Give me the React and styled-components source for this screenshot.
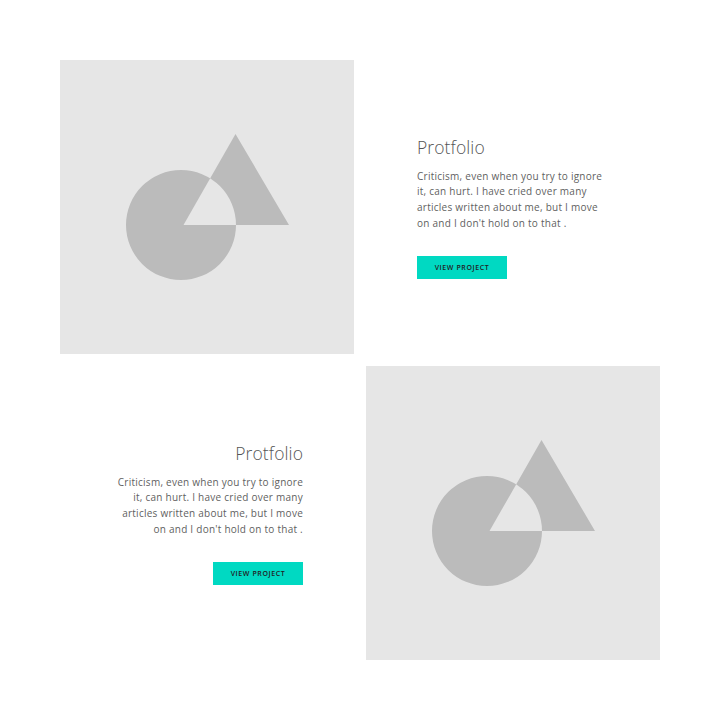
import React from 'react';
import styled, { createGlobalStyle } from 'styled-components';

const GlobalStyle = createGlobalStyle`
	html, body {
		margin: 0;
		padding: 0;
		background: #ffffff;
		font-family: "Open Sans", "Liberation Sans", sans-serif;
	}
`

const Page = styled.div`
	width: 720px;
	height: 720px;
	padding: 60px;
	box-sizing: border-box;
	display: grid;
	grid-template-rows: 294px 294px;
	row-gap: 12px;
`

const Row = styled.section`
	display: grid;
	grid-template-columns: ${props => props.reverse ? '1fr 294px' : '294px 1fr'};
	column-gap: 63px;
	align-items: center;
`

const Picture = styled.div`
	width: 294px;
	height: 294px;
	background: #e6e6e6;
	order: ${props => props.reverse ? 2 : 1};
	svg {
		display: block;
	}
`

const Info = styled.div`
	order: ${props => props.reverse ? 1 : 2};
	display: flex;
	flex-direction: column;
	align-items: ${props => props.reverse ? 'flex-end' : 'flex-start'};
	text-align: ${props => props.reverse ? 'right' : 'left'};
	padding-top: 2px;
`

const Title = styled.h2`
	margin: 0;
	font-family: "Open Sans", sans-serif;
	font-weight: 300;
	font-size: 17.5px;
	line-height: 22px;
	color: #555555;
	letter-spacing: 0.1px;
	position: relative;
	top: -1px;
`

const Text = styled.p`
	margin: 10px 0 0;
	font-size: 10px;
	line-height: 15.7px;
	color: #5f5f5f;
	letter-spacing: 0.25px;
	white-space: nowrap;
`

const Button = styled.button`
	margin-top: 25px;
	width: 90px;
	height: 23px;
	border: none;
	padding: 0;
	background: #00d9c2;
	color: #222222;
	font-family: "Open Sans", sans-serif;
	font-size: 7px;
	font-weight: 600;
	letter-spacing: 0.6px;
	cursor: pointer;
`

const Shapes = () => (
	<svg width="294" height="294" viewBox="0 0 294 294">
		<path
			fillRule="evenodd"
			fill="#bbbbbb"
			d="M66 165 A55 55 0 1 0 176 165 A55 55 0 1 0 66 165 Z M175.5 74 L229 165 L123.5 165 Z"
		/>
	</svg>
)

const projects = [
	{ id: 1, reverse: false },
	{ id: 2, reverse: true },
]

const App = () => (
	<>
		<GlobalStyle />
		<Page>
			{projects.map(p => (
				<Row key={p.id} reverse={p.reverse}>
					<Picture reverse={p.reverse}>
						<Shapes />
					</Picture>
					<Info reverse={p.reverse}>
						<Title>Protfolio</Title>
						<Text>
							Criticism, even when you try to ignore<br />
							it, can hurt. I have cried over many<br />
							articles written about me, but I move<br />
							on and I don't hold on to that .
						</Text>
						<Button>VIEW PROJECT</Button>
					</Info>
				</Row>
			))}
		</Page>
	</>
)

export default App;
